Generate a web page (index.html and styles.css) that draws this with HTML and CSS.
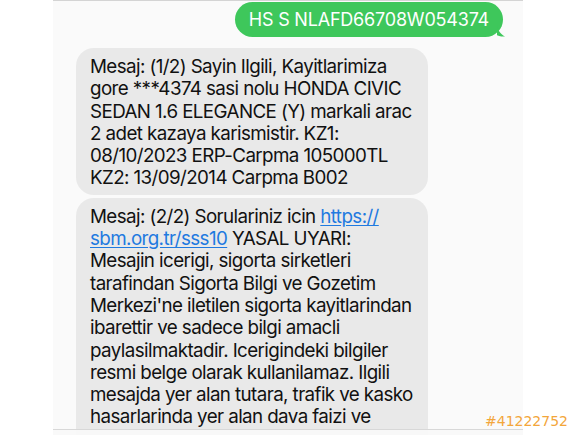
FILE: index.html
```html
<!DOCTYPE html>
<html lang="tr">
<head>
<meta charset="utf-8">
<title>Mesajlar</title>
<link rel="stylesheet" href="styles.css">
</head>
<body>
<div class="screen">
  <div class="thread">
    <div class="row row-out">
      <div class="bubble bubble-out">HS S NLAFD66708W054374
        <svg class="tail" width="12" height="12" viewBox="0 0 12 12"><path d="M0 0 C1 5 3 9 8 11.5 C4 11.8 1 11 -2 9 Z" fill="#3ec75b"/></svg>
      </div>
    </div>
    <div class="row row-in">
      <div class="bubble bubble-in">Mesaj: (1/2) Sayin Ilgili, Kayitlarimiza<br>gore ***4374 sasi nolu HONDA CIVIC<br>SEDAN 1.6 ELEGANCE (Y) markali arac<br>2 adet kazaya karismistir. KZ1:<br>08/10/2023 ERP-Carpma 105000TL<br>KZ2: 13/09/2014 Carpma B002</div>
    </div>
    <div class="row row-in">
      <div class="bubble bubble-in bubble-tall">Mesaj: (2/2) Sorulariniz icin <a class="link" href="#">https://<br>sbm.org.tr/sss10</a> YASAL UYARI:<br>Mesajin icerigi, sigorta sirketleri<br>tarafindan Sigorta Bilgi ve Gozetim<br>Merkezi'ne iletilen sigorta kayitlarindan<br>ibarettir ve sadece bilgi amacli<br>paylasilmaktadir. Icerigindeki bilgiler<br>resmi belge olarak kullanilamaz. Ilgili<br>mesajda yer alan tutara, trafik ve kasko<br>hasarlarinda yer alan dava faizi ve</div>
    </div>
  </div>
  <div class="composer"></div>
</div>
<div class="listing-id">#41222752</div>
</body>
</html>
```
FILE: styles.css
```css
html, body {
  margin: 0;
  padding: 0;
  background: #ffffff;
}

body {
  width: 580px;
  height: 435px;
  overflow: hidden;
  position: relative;
  font-family: "Inter", "Liberation Sans", sans-serif;
}

.screen {
  margin-left: 53px;
  width: 470px;
  height: 435px;
  background: #fafafa;
  border-top: 1px solid #d4d4d4;
  box-sizing: border-box;
  position: relative;
  overflow: hidden;
}

.thread {
  display: flex;
  flex-direction: column;
  padding: 1px 20px 0 23px;
}

.row {
  display: flex;
}

.row-out {
  justify-content: flex-end;
  margin-bottom: 11px;
}

.row-in {
  justify-content: flex-start;
  margin-bottom: 3px;
}

.bubble {
  position: relative;
  box-sizing: border-box;
  border-radius: 18px;
}

.bubble-out {
  background: #3ec75b;
  color: #ffffff;
  font-size: 18px;
  line-height: 35px;
  height: 35px;
  padding: 0 14px;
  letter-spacing: -0.2px;
}

.tail {
  position: absolute;
  right: -6px;
  bottom: 0;
}

.bubble-in {
  width: 352px;
  background: #e9e9e9;
  color: #111111;
  font-size: 18.8px;
  line-height: 22.3px;
  padding: 8px 10px 5px 14px;
  letter-spacing: -0.6px;
  white-space: nowrap;
}

.bubble-tall {
  height: 260px;
}

.link {
  color: #1f7ae0;
  text-decoration: underline;
  text-underline-offset: 2px;
}

.composer {
  position: absolute;
  left: 0;
  right: 0;
  bottom: 0;
  height: 5px;
  background: rgba(248, 248, 248, 0.92);
  border-top: 1px solid #d8d8d8;
}

.listing-id {
  position: absolute;
  left: 485px;
  top: 412px;
  font-family: "DejaVu Sans", sans-serif;
  font-size: 14px;
  line-height: 18px;
  color: #f3a63a;
}
```
